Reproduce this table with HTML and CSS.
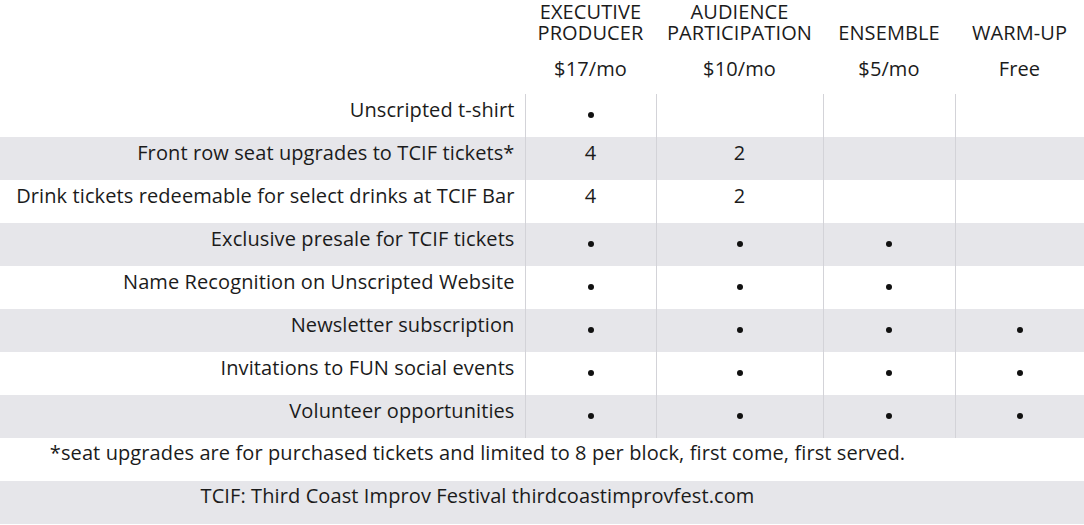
FILE: index.html
```html
<!DOCTYPE html>
<html>
<head>
<meta charset="utf-8">
<link rel="stylesheet" href="styles.css">
</head>
<body>
<table class="tiers">
  <colgroup>
    <col class="c-label"><col class="c-ep"><col class="c-ap"><col class="c-en"><col class="c-wu">
  </colgroup>
  <thead>
    <tr class="names">
      <th></th>
      <th>EXECUTIVE<br>PRODUCER</th>
      <th>AUDIENCE<br>PARTICIPATION</th>
      <th>ENSEMBLE</th>
      <th>WARM-UP</th>
    </tr>
    <tr class="prices">
      <th></th>
      <th>$17/mo</th>
      <th>$10/mo</th>
      <th>$5/mo</th>
      <th>Free</th>
    </tr>
  </thead>
  <tbody>
    <tr><td class="label">Unscripted t-shirt</td><td><span class="dot"></span></td><td></td><td></td><td></td></tr>
    <tr class="alt"><td class="label">Front row seat upgrades to TCIF tickets*</td><td>4</td><td>2</td><td></td><td></td></tr>
    <tr><td class="label">Drink tickets redeemable for select drinks at TCIF Bar</td><td>4</td><td>2</td><td></td><td></td></tr>
    <tr class="alt"><td class="label">Exclusive presale for TCIF tickets</td><td><span class="dot"></span></td><td><span class="dot"></span></td><td><span class="dot"></span></td><td></td></tr>
    <tr><td class="label">Name Recognition on Unscripted Website</td><td><span class="dot"></span></td><td><span class="dot"></span></td><td><span class="dot"></span></td><td></td></tr>
    <tr class="alt"><td class="label">Newsletter subscription</td><td><span class="dot"></span></td><td><span class="dot"></span></td><td><span class="dot"></span></td><td><span class="dot"></span></td></tr>
    <tr><td class="label">Invitations to FUN social events</td><td><span class="dot"></span></td><td><span class="dot"></span></td><td><span class="dot"></span></td><td><span class="dot"></span></td></tr>
    <tr class="alt"><td class="label">Volunteer opportunities</td><td><span class="dot"></span></td><td><span class="dot"></span></td><td><span class="dot"></span></td><td><span class="dot"></span></td></tr>
  </tbody>
  <tfoot>
    <tr><td class="note" colspan="4">*seat upgrades are for purchased tickets and limited to 8 per block, first come, first served.</td><td class="blank"></td></tr>
    <tr class="alt"><td class="note" colspan="4">TCIF: Third Coast Improv Festival thirdcoastimprovfest.com</td><td class="blank"></td></tr>
  </tfoot>
</table>
</body>
</html>
```

FILE: styles.css
```css
html, body {
  margin: 0;
  padding: 0;
  background: #ffffff;
}
body {
  font-family: "Open Sans", Lato, sans-serif;
  color: #1b1b1b;
  font-size: 20px;
  letter-spacing: 0.1px;
}
.tiers {
  width: 1084px;
  border-collapse: collapse;
  table-layout: fixed;
}
.c-label { width: 525px; }
.c-ep { width: 131px; }
.c-ap { width: 167px; }
.c-en { width: 132px; }
.c-wu { width: 129px; }

.tiers th {
  font-weight: 400;
  text-align: center;
  padding: 0;
}
.names th {
  height: 46px;
  vertical-align: bottom;
  line-height: 21px;
  padding-bottom: 3px;
  box-sizing: border-box;
}
.prices th {
  height: 48px;
  vertical-align: middle;
  padding-bottom: 3px;
  box-sizing: border-box;
  line-height: 24px;
}
.tiers td {
  text-align: center;
  vertical-align: top;
  line-height: 18px;
  padding: 7px 0 0 0;
}
tbody td {
  height: 43px;
  border-left: 1px solid #d3d3d8;
  box-sizing: border-box;
}
tbody td.label {
  border-left: none;
  text-align: right;
  padding-right: 10px;
}
.dot {
  display: inline-block;
  width: 6px;
  height: 6px;
  border-radius: 50%;
  background: #111;
  vertical-align: middle;
  margin-top: 7px;
}
.alt {
  background: #e6e6ea;
}
tfoot td {
  height: 43px;
  box-sizing: border-box;
}
.tiers tfoot td {
  padding-top: 6px;
}
.note {
  text-align: center;
}
```
